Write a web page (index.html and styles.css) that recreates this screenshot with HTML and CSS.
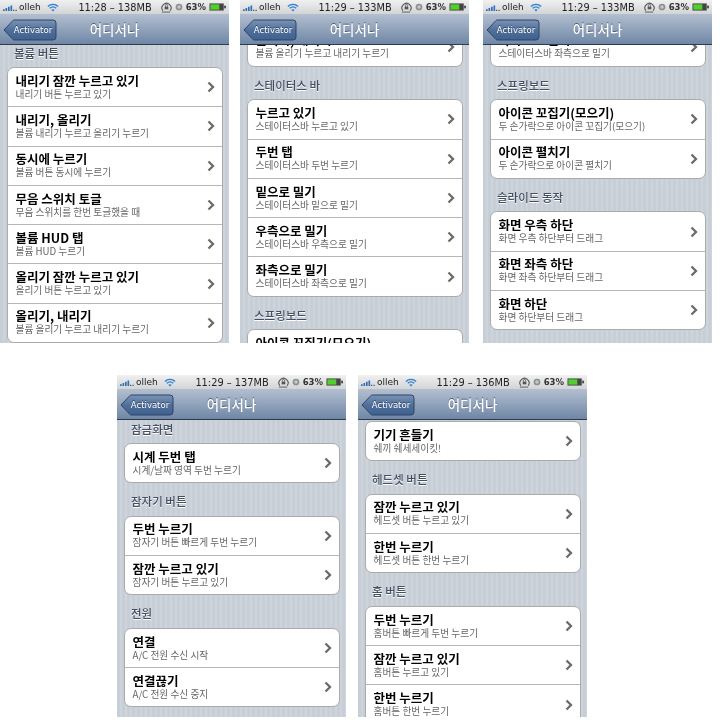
FILE: index.html
```html
<!DOCTYPE html>
<html>
<head>
  <meta charset="UTF-8">
  <title>Activator</title>
  <link rel="stylesheet" href="styles.css">
</head>
<body>
  <svg class="defs" width="0" height="0">
    <symbol id="chev" viewBox="0 0 8 12"><path d="M1.500 1.500 6 6l-4.500 4.500" fill="none" stroke="#6b6b6b" stroke-width="2.300"/></symbol>
    <symbol id="wifi" viewBox="0 0 14 10"><path d="M1 3.800C4.500.6 9.500.6 13 3.800M3.200 6C5.400 4 8.600 4 10.800 6" fill="none" stroke="#2a7fd0" stroke-width="1.600"/><path d="M7 9.800 5 7.700c1.200-.9 2.800-.9 4 0z" fill="#2a7fd0"/></symbol>
    <symbol id="signal" viewBox="0 0 18 7"><path d="M0 5h2v2H0zM3 3.500h2V7H3zM6 2h2v5H6zM9 .5h2V7H9z" fill="#2f6fb8"/><path d="M12 5.500h1.500V7H12zM15 5.500h1.500V7H15z" fill="#555"/></symbol>
    <symbol id="lock" viewBox="0 0 12 12"><path d="M2 9.500A5 5 0 1 1 10 9.500" fill="none" stroke="#555" stroke-width="1.200"/><rect x="4" y="5" width="4" height="3" fill="#555"/><path d="M4.800 5V3.800a1.200 1.200 0 0 1 2.400 0V5" fill="none" stroke="#555"/><path d="M1 11h9" stroke="#555"/></symbol>
    <symbol id="alarm" viewBox="0 0 10 10"><circle cx="5" cy="5" r="4.200" fill="#8b8f92"/><circle cx="5" cy="5" r="2.200" fill="#c4c8cb"/></symbol>
    <symbol id="battery" viewBox="0 0 19 9"><rect x=".5" y=".5" width="16" height="8" fill="#444"/><rect x="1.500" y="1.500" width="10" height="6" fill="#4fd02f"/><rect x="17" y="3" width="2" height="3" fill="#444"/></symbol>
    <symbol id="backbtn" viewBox="0 0 54 22"><path d="M1 11 10 1.500Q10.500 1 11.500 1H50q3 0 3 3v14q0 3-3 3H11.500Q10.500 21 10 20.500z" fill="url(#backfill)" stroke="#2f4564"/></symbol>
    <linearGradient id="backfill" x1="0" y1="0" x2="0" y2="1"><stop offset="0" stop-color="#7b93b4"/><stop offset=".5" stop-color="#50709b"/><stop offset="1" stop-color="#3f6190"/></linearGradient>
  </svg>

  <div class="row row-top">
    <div class="screen">
      <div class="status">
        <div class="st-left"><svg class="i-signal"><use href="#signal"/></svg>olleh<svg class="i-wifi"><use href="#wifi"/></svg></div>
        <div class="st-time">11:28 – 138MB</div>
        <div class="st-right"><svg class="i-lock"><use href="#lock"/></svg><svg class="i-alarm"><use href="#alarm"/></svg>63%<svg class="i-batt"><use href="#battery"/></svg></div>
      </div>
      <div class="nav">
        <div class="back"><svg><use href="#backbtn"/></svg><span>Activator</span></div>
        <div class="title">어디서나</div>
      </div>
      <div class="content">
        <div class="list off-1">
          <div class="label">볼륨 버튼</div>
          <div class="card">
            <div class="item"><div class="txt"><b>내리기 잠깐 누르고 있기</b><small>내리기 버튼 누르고 있기</small></div><svg class="chev"><use href="#chev"/></svg></div>
            <div class="item"><div class="txt"><b>내리기, 올리기</b><small>볼륨 내리기 누르고 올리기 누르기</small></div><svg class="chev"><use href="#chev"/></svg></div>
            <div class="item"><div class="txt"><b>동시에 누르기</b><small>볼륨 버튼 동시에 누르기</small></div><svg class="chev"><use href="#chev"/></svg></div>
            <div class="item"><div class="txt"><b>무음 스위치 토글</b><small>무음 스위치를 한번 토글했을 때</small></div><svg class="chev"><use href="#chev"/></svg></div>
            <div class="item"><div class="txt"><b>볼륨 HUD 탭</b><small>볼륨 HUD 누르기</small></div><svg class="chev"><use href="#chev"/></svg></div>
            <div class="item"><div class="txt"><b>올리기 잠깐 누르고 있기</b><small>올리기 버튼 누르고 있기</small></div><svg class="chev"><use href="#chev"/></svg></div>
            <div class="item"><div class="txt"><b>올리기, 내리기</b><small>볼륨 올리기 누르고 내리기 누르기</small></div><svg class="chev"><use href="#chev"/></svg></div>
          </div>
        </div>
      </div>
    </div>

    <div class="screen gap-a">
      <div class="status">
        <div class="st-left"><svg class="i-signal"><use href="#signal"/></svg>olleh<svg class="i-wifi"><use href="#wifi"/></svg></div>
        <div class="st-time">11:29 – 133MB</div>
        <div class="st-right"><svg class="i-lock"><use href="#lock"/></svg><svg class="i-alarm"><use href="#alarm"/></svg>63%<svg class="i-batt"><use href="#battery"/></svg></div>
      </div>
      <div class="nav">
        <div class="back"><svg><use href="#backbtn"/></svg><span>Activator</span></div>
        <div class="title">어디서나</div>
      </div>
      <div class="content">
        <div class="list off-2">
          <div class="card">
            <div class="item"><div class="txt"><b>올리기, 내리기</b><small>볼륨 올리기 누르고 내리기 누르기</small></div><svg class="chev"><use href="#chev"/></svg></div>
          </div>
          <div class="label">스테이터스 바</div>
          <div class="card">
            <div class="item"><div class="txt"><b>누르고 있기</b><small>스테이터스바 누르고 있기</small></div><svg class="chev"><use href="#chev"/></svg></div>
            <div class="item"><div class="txt"><b>두번 탭</b><small>스테이터스바 두번 누르기</small></div><svg class="chev"><use href="#chev"/></svg></div>
            <div class="item"><div class="txt"><b>밑으로 밀기</b><small>스테이터스바 밑으로 밀기</small></div><svg class="chev"><use href="#chev"/></svg></div>
            <div class="item"><div class="txt"><b>우측으로 밀기</b><small>스테이터스바 우측으로 밀기</small></div><svg class="chev"><use href="#chev"/></svg></div>
            <div class="item"><div class="txt"><b>좌측으로 밀기</b><small>스테이터스바 좌측으로 밀기</small></div><svg class="chev"><use href="#chev"/></svg></div>
          </div>
          <div class="label">스프링보드</div>
          <div class="card">
            <div class="item"><div class="txt"><b>아이콘 꼬집기(모으기)</b><small>두 손가락으로 아이콘 꼬집기(모으기)</small></div><svg class="chev"><use href="#chev"/></svg></div>
          </div>
        </div>
      </div>
    </div>

    <div class="screen gap-b">
      <div class="status">
        <div class="st-left"><svg class="i-signal"><use href="#signal"/></svg>olleh<svg class="i-wifi"><use href="#wifi"/></svg></div>
        <div class="st-time">11:29 – 133MB</div>
        <div class="st-right"><svg class="i-lock"><use href="#lock"/></svg><svg class="i-alarm"><use href="#alarm"/></svg>63%<svg class="i-batt"><use href="#battery"/></svg></div>
      </div>
      <div class="nav">
        <div class="back"><svg><use href="#backbtn"/></svg><span>Activator</span></div>
        <div class="title">어디서나</div>
      </div>
      <div class="content">
        <div class="list off-2">
          <div class="card">
            <div class="item"><div class="txt"><b>좌측으로 밀기</b><small>스테이터스바 좌측으로 밀기</small></div><svg class="chev"><use href="#chev"/></svg></div>
          </div>
          <div class="label">스프링보드</div>
          <div class="card">
            <div class="item"><div class="txt"><b>아이콘 꼬집기(모으기)</b><small>두 손가락으로 아이콘 꼬집기(모으기)</small></div><svg class="chev"><use href="#chev"/></svg></div>
            <div class="item"><div class="txt"><b>아이콘 펼치기</b><small>두 손가락으로 아이콘 펼치기</small></div><svg class="chev"><use href="#chev"/></svg></div>
          </div>
          <div class="label">슬라이드 동작</div>
          <div class="card">
            <div class="item"><div class="txt"><b>화면 우측 하단</b><small>화면 우측 하단부터 드래그</small></div><svg class="chev"><use href="#chev"/></svg></div>
            <div class="item"><div class="txt"><b>화면 좌측 하단</b><small>화면 좌측 하단부터 드래그</small></div><svg class="chev"><use href="#chev"/></svg></div>
            <div class="item"><div class="txt"><b>화면 하단</b><small>화면 하단부터 드래그</small></div><svg class="chev"><use href="#chev"/></svg></div>
          </div>
          <div class="label">잠금화면</div>
        </div>
      </div>
    </div>
  </div>

  <div class="row row-bottom">
    <div class="screen">
      <div class="status">
        <div class="st-left"><svg class="i-signal"><use href="#signal"/></svg>olleh<svg class="i-wifi"><use href="#wifi"/></svg></div>
        <div class="st-time">11:29 – 137MB</div>
        <div class="st-right"><svg class="i-lock"><use href="#lock"/></svg><svg class="i-alarm"><use href="#alarm"/></svg>63%<svg class="i-batt"><use href="#battery"/></svg></div>
      </div>
      <div class="nav">
        <div class="back"><svg><use href="#backbtn"/></svg><span>Activator</span></div>
        <div class="title">어디서나</div>
      </div>
      <div class="content">
        <div class="list off-4">
          <div class="label">잠금화면</div>
          <div class="card">
            <div class="item"><div class="txt"><b>시계 두번 탭</b><small>시계/날짜 영역 두번 누르기</small></div><svg class="chev"><use href="#chev"/></svg></div>
          </div>
          <div class="label">잠자기 버튼</div>
          <div class="card">
            <div class="item"><div class="txt"><b>두번 누르기</b><small>잠자기 버튼 빠르게 두번 누르기</small></div><svg class="chev"><use href="#chev"/></svg></div>
            <div class="item"><div class="txt"><b>잠깐 누르고 있기</b><small>잠자기 버튼 누르고 있기</small></div><svg class="chev"><use href="#chev"/></svg></div>
          </div>
          <div class="label">전원</div>
          <div class="card">
            <div class="item"><div class="txt"><b>연결</b><small>A/C 전원 수신 시작</small></div><svg class="chev"><use href="#chev"/></svg></div>
            <div class="item"><div class="txt"><b>연결끊기</b><small>A/C 전원 수신 중지</small></div><svg class="chev"><use href="#chev"/></svg></div>
          </div>
        </div>
      </div>
    </div>

    <div class="screen gap-c">
      <div class="status">
        <div class="st-left"><svg class="i-signal"><use href="#signal"/></svg>olleh<svg class="i-wifi"><use href="#wifi"/></svg></div>
        <div class="st-time">11:29 – 136MB</div>
        <div class="st-right"><svg class="i-lock"><use href="#lock"/></svg><svg class="i-alarm"><use href="#alarm"/></svg>63%<svg class="i-batt"><use href="#battery"/></svg></div>
      </div>
      <div class="nav">
        <div class="back"><svg><use href="#backbtn"/></svg><span>Activator</span></div>
        <div class="title">어디서나</div>
      </div>
      <div class="content">
        <div class="list off-5">
          <div class="card">
            <div class="item"><div class="txt"><b>기기 흔들기</b><small>쉐끼 쉐세세이킷!</small></div><svg class="chev"><use href="#chev"/></svg></div>
          </div>
          <div class="label">헤드셋 버튼</div>
          <div class="card">
            <div class="item"><div class="txt"><b>잠깐 누르고 있기</b><small>헤드셋 버튼 누르고 있기</small></div><svg class="chev"><use href="#chev"/></svg></div>
            <div class="item"><div class="txt"><b>한번 누르기</b><small>헤드셋 버튼 한번 누르기</small></div><svg class="chev"><use href="#chev"/></svg></div>
          </div>
          <div class="label">홈 버튼</div>
          <div class="card">
            <div class="item"><div class="txt"><b>두번 누르기</b><small>홈버튼 빠르게 두번 누르기</small></div><svg class="chev"><use href="#chev"/></svg></div>
            <div class="item"><div class="txt"><b>잠깐 누르고 있기</b><small>홈버튼 누르고 있기</small></div><svg class="chev"><use href="#chev"/></svg></div>
            <div class="item"><div class="txt"><b>한번 누르기</b><small>홈버튼 한번 누르기</small></div><svg class="chev"><use href="#chev"/></svg></div>
          </div>
        </div>
      </div>
    </div>
  </div>
</body>
</html>
```

FILE: styles.css
```css
body { margin: 0; background: #fff; font-family: "Noto Sans CJK KR", "Noto Sans", sans-serif; }
.defs { position: absolute; }

.row { display: flex; }
.row-top { height: 343px; }
.row-bottom { height: 342px; margin-top: 32px; padding-left: 117px; }
.gap-a { margin-left: 11px; }
.gap-b { margin-left: 14px; }
.gap-c { margin-left: 12px; }

.screen { width: 229px; display: flex; flex-direction: column; overflow: hidden; filter: blur(.35px); }

/* status bar */
.status { height: 14px; flex: none; display: flex; align-items: center; padding: 0 2px 0 3px; background: linear-gradient(#f0f0f0, #d2d4d6); font-family: "DejaVu Sans", sans-serif; font-size: 9px; color: #222; }
.st-left, .st-right { flex: 1 1 0; display: flex; align-items: center; }
.st-right { justify-content: flex-end; font-size: 8.500px; font-weight: bold; color: #333; }
.st-time { font-size: 9.800px; white-space: nowrap; }
.i-signal { width: 15px; height: 6px; margin: 2px 1px 0 0; }
.i-wifi { width: 12px; height: 9px; margin-left: 6px; }
.i-lock { width: 11px; height: 11px; margin-right: 3px; }
.i-alarm { width: 8px; height: 8px; margin-right: 3px; }
.i-batt { width: 19px; height: 8px; margin-left: 2px; }

/* nav bar */
.nav { height: 30px; flex: none; position: relative; display: flex; align-items: center; justify-content: center; background: linear-gradient(#b3bfd0, #6f87a6); border-bottom: 1px solid #2f3a4b; z-index: 1; }
.title { font-size: 13.500px; font-weight: 500; color: #fff; text-shadow: 0 -1px 0 #4c5d77; }
.back { position: absolute; left: 3px; top: 5px; width: 54px; height: 22px; display: flex; align-items: center; justify-content: center; }
.back svg { position: absolute; left: 0; top: 0; width: 54px; height: 22px; }
.back span { position: relative; padding-left: 6px; font-family: "DejaVu Sans", sans-serif; font-size: 8.500px; color: #fff; text-shadow: 0 -1px 0 #2f4564; }

/* list */
.content { flex: 1; overflow: hidden; background: repeating-linear-gradient(90deg, #c7ced6 0 3px, #cdd4db 3px 5px); }
.off-1 { margin-top: -10.500px; }
.off-2 { margin-top: -18.500px; }
.off-4 { margin-top: -9.500px; }
.off-5 { margin-top: 1px; }

.label { height: 32.500px; box-sizing: border-box; padding: 11px 0 0 14px; font-size: 11.500px; line-height: 15px; font-weight: 500; color: #454f64; text-shadow: 0 1px 0 #fff; }
.card { margin: 0 6.500px; background: #fff; border: 1px solid #a9abad; border-radius: 7px; box-sizing: border-box; }
.item { height: 39.300px; box-sizing: border-box; display: flex; align-items: center; justify-content: space-between; padding: 0 7px 0 8px; border-bottom: 1px solid #b4b6b8; }
.item:last-child { border-bottom: 0; height: 38.300px; }
.txt { display: flex; flex-direction: column; }
.txt b { font-size: 12.500px; line-height: 14px; font-weight: 700; color: #000; white-space: nowrap; }
.txt small { font-size: 9.700px; line-height: 13px; color: #666; white-space: nowrap; }
.chev { width: 8px; height: 12px; }
```
